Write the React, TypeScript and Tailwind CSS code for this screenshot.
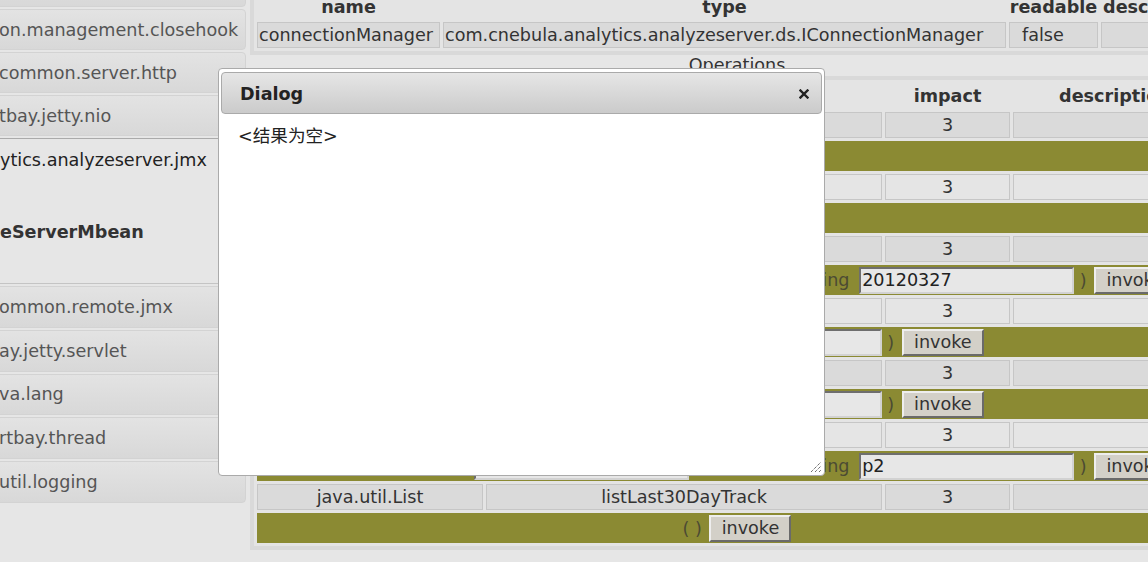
import React from "react";

const topItems = [
  "rtbay.jetty.util",
  "on.management.closehook",
  "common.server.http",
  "tbay.jetty.nio",
];

const bottomItems = [
  "ommon.remote.jmx",
  "ay.jetty.servlet",
  "va.lang",
  "rtbay.thread",
  "util.logging",
];

type Op = { ret: string; name: string; params: string[] };

const ops: Op[] = [
  { ret: "void", name: "reloadConfig", params: [] },
  { ret: "void", name: "flushCache", params: [] },
  { ret: "void", name: "rebuildDayTrack", params: ["", "20120327"] },
  { ret: "void", name: "removeSite", params: [""] },
  { ret: "void", name: "removeUser", params: [""] },
  { ret: "void", name: "renameSite", params: ["p1", "p2"] },
  { ret: "java.util.List", name: "listLast30DayTrack", params: [] },
];

const SideItem = ({ label, tall }: { label: string; tall?: boolean }) => (
  <div
    className={`mt-[2px] flex items-center rounded-[4px] border border-[#d3d3d3] bg-linear-to-b from-[#e3e3e3] to-[#d8d8d8] pl-[4px] whitespace-nowrap text-[#555] ${
      tall ? "h-[41.75px]" : "h-[41px]"
    }`}
  >
    {label}
  </div>
);

const Sidebar = () => (
  <aside className="w-[246px] shrink-0 overflow-hidden">
    <div className="-ml-[6px] -mt-[36px] w-[252px]">
      {topItems.map((t) => (
        <SideItem key={t} label={t} />
      ))}
      <div className="mt-[2px] flex h-[42px] items-center rounded-t-[4px] border border-b-0 border-[#aaaaaa] bg-[#e6e6e6] pl-[5px] whitespace-nowrap text-[#222]">
        ytics.analyzeserver.jmx
      </div>
      <div className="flex h-[104px] items-center border border-t-0 border-[#c4c4c4] bg-[#e6e6e6] pl-[5px] font-bold whitespace-nowrap text-[#333]">
        eServerMbean
      </div>
      {bottomItems.map((t) => (
        <SideItem key={t} label={t} tall />
      ))}
    </div>
  </aside>
);

const cell = "h-[26px] border border-[#c6c6c6] p-0";

const ParamInput = ({ value }: { value: string }) => (
  <input
    readOnly
    defaultValue={value}
    className="ml-[4px] inline-block h-[27px] w-[215px] border-2 border-t-[#6e6e6e] border-l-[#6e6e6e] border-b-[#d2d2d2] border-r-[#d2d2d2] bg-[#e7e7e7] px-[1px] align-middle text-[#222] outline-none"
  />
);

const OliveRow = ({ params }: { params: string[] }) => (
  <tr>
    <td colSpan={4} className="h-[30px] bg-[#8b8a33] p-0 text-center align-middle whitespace-nowrap text-[#4b4b33]">
      <span className="align-middle">(</span>
      {params.map((v, i) => (
        <React.Fragment key={i}>
          <span className="ml-[16px] align-middle"> java.lang.String </span>
          <ParamInput value={v} />
        </React.Fragment>
      ))}
      <span className="align-middle"> ) </span>
      <button className="ml-[2px] inline-block h-[27px] w-[82px] border-2 border-t-[#eeeeee] border-l-[#eeeeee] border-b-[#6a6a6a] border-r-[#6a6a6a] bg-[#d3d0c8] p-0 align-middle text-[#333]">
        invoke
      </button>
    </td>
  </tr>
);

const Main = () => (
  <main className="ml-[4px] w-[974px] shrink-0 text-[#333]">
    <div className="-mt-[12.3px] border-[4px] border-[#d9d9d9] bg-[#e4e4e4]">
      <table className="w-full table-fixed border-separate border-spacing-x-[3px] border-spacing-y-[3px]">
        <thead>
          <tr>
            <th className="h-[24px] w-[183px] p-0 font-bold">name</th>
            <th className="h-[24px] w-[563px] p-0 font-bold">type</th>
            <th className="h-[24px] w-[89px] p-0 font-bold">readable</th>
            <th className="h-[24px] w-[116px] p-0 font-bold">description</th>
          </tr>
        </thead>
        <tbody>
          <tr className="bg-[#dadada]">
            <td className={`${cell} pl-[1px] whitespace-nowrap`}>connectionManager</td>
            <td className={`${cell} pl-[1px] whitespace-nowrap`}>
              com.cnebula.analytics.analyzeserver.ds.IConnectionManager
            </td>
            <td className={`${cell} pl-[12px]`}>false</td>
            <td className={cell}></td>
          </tr>
        </tbody>
      </table>
    </div>

    <div className="flex h-[21.3px] items-center justify-center">Operations</div>

    <div className="border-[4px] border-[#d9d9d9] bg-[#e4e4e4]">
      <table className="w-full table-fixed border-separate border-spacing-x-[3px] border-spacing-y-[3px]">
        <thead>
          <tr>
            <th className="h-[26px] w-[226px] p-0 font-bold">return</th>
            <th className="h-[26px] w-[396px] p-0 font-bold">name</th>
            <th className="h-[26px] w-[125px] p-0 font-bold">impact</th>
            <th className="h-[26px] w-[204px] p-0 font-bold">description</th>
          </tr>
        </thead>
        <tbody>
          {ops.map((op, i) => {
            const bg = i % 2 === 0 ? "bg-[#dadada]" : "bg-[#e5e5e5]";
            return (
              <React.Fragment key={op.name}>
                <tr className={bg}>
                  <td className={`${cell} text-center`}>{op.ret}</td>
                  <td className={`${cell} text-center`}>{op.name}</td>
                  <td className={`${cell} text-center`}>3</td>
                  <td className={cell}></td>
                </tr>
                <OliveRow params={op.params} />
              </React.Fragment>
            );
          })}
        </tbody>
      </table>
    </div>
  </main>
);

const Dialog = () => (
  <div className="absolute left-[218px] top-[68px] h-[408px] w-[607px] rounded-[4px] border border-[#aaaaaa] bg-white px-[2px] pt-[3px]">
    <div className="flex h-[42px] items-center justify-between rounded-[4px] border border-[#aaaaaa] bg-linear-to-b from-[#e6e6e6] to-[#cbcbcb] pl-[18px] pr-[12px] pt-[2px] font-bold text-[#222]">
      <span>Dialog</span>
      <svg width="10" height="10" viewBox="0 0 10 10">
        <path d="M1.5 1.5 L8.5 8.5 M8.5 1.5 L1.5 8.5" stroke="#222" strokeWidth="2.4" strokeLinecap="square" />
      </svg>
    </div>
    <div className="px-[17px] pt-[12px] text-[#222]">&lt;结果为空&gt;</div>
    <svg className="absolute bottom-[2px] right-[2px]" width="12" height="12" viewBox="0 0 12 12">
      <path
        d="M1 11 L11 1 M5 11 L11 5 M9 11 L11 9"
        stroke="#333"
        strokeWidth="1"
        strokeDasharray="1 1"
      />
    </svg>
  </div>
);

export default function App() {
  return (
    <div className="relative h-[562px] w-[1148px] overflow-hidden bg-[#e6e6e6] font-['DejaVu_Sans','Noto_Sans_CJK_SC',sans-serif] text-[17.6px] leading-[20px]">
      <div className="flex">
        <Sidebar />
        <Main />
      </div>
      <Dialog />
    </div>
  );
}
